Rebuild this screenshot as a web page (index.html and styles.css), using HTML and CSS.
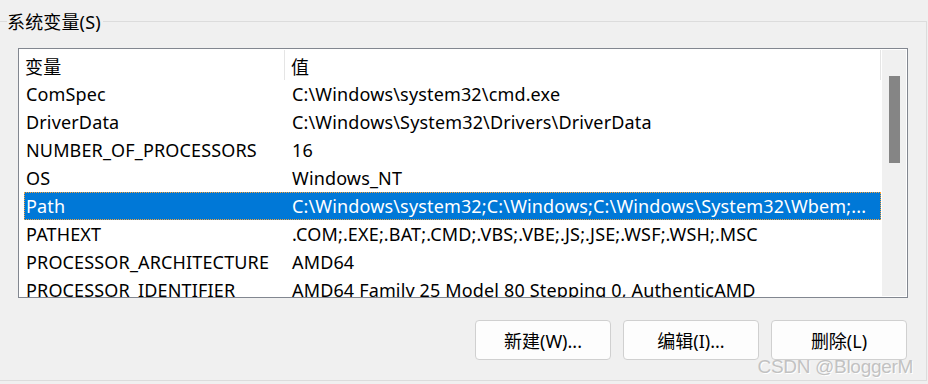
FILE: index.html
```html
<!DOCTYPE html>
<html lang="zh-CN">
<head>
    <meta charset="UTF-8">
    <title>系统变量</title>
    <link rel="stylesheet" href="styles.css">
</head>
<body>
    <div class="group">
        <div class="legend">系统变量(S)</div>
        <div class="listbox">
            <div class="table">
                <div class="header">
                    <div class="col-name">变量</div>
                    <div class="col-value">值</div>
                </div>
                <div class="row"><div class="col-name">ComSpec</div><div class="col-value">C:\Windows\system32\cmd.exe</div></div>
                <div class="row"><div class="col-name">DriverData</div><div class="col-value">C:\Windows\System32\Drivers\DriverData</div></div>
                <div class="row"><div class="col-name">NUMBER_OF_PROCESSORS</div><div class="col-value">16</div></div>
                <div class="row"><div class="col-name">OS</div><div class="col-value">Windows_NT</div></div>
                <div class="row selected"><div class="col-name">Path</div><div class="col-value">C:\Windows\system32;C:\Windows;C:\Windows\System32\Wbem;...</div></div>
                <div class="row"><div class="col-name">PATHEXT</div><div class="col-value">.COM;.EXE;.BAT;.CMD;.VBS;.VBE;.JS;.JSE;.WSF;.WSH;.MSC</div></div>
                <div class="row"><div class="col-name">PROCESSOR_ARCHITECTURE</div><div class="col-value">AMD64</div></div>
                <div class="row"><div class="col-name">PROCESSOR_IDENTIFIER</div><div class="col-value">AMD64 Family 25 Model 80 Stepping 0, AuthenticAMD</div></div>
            </div>
            <div class="scrollbar">
                <div class="thumb"></div>
            </div>
        </div>
        <div class="buttons">
            <button class="btn">新建(W)...</button>
            <button class="btn">编辑(I)...</button>
            <button class="btn">删除(L)</button>
        </div>
    </div>
    <div class="watermark">CSDN @BloggerM</div>
</body>
</html>
```

FILE: styles.css
```css
body {
    margin: 0;
    width: 928px;
    height: 384px;
    overflow: hidden;
    background-color: #f0f0f0;
    font-family: "Noto Sans", "Noto Sans CJK SC", sans-serif;
    font-size: 18px;
    letter-spacing: 0.15px;
    color: #000;
    position: relative;
}
.group {
    margin: 21px 1px 0 -10px;
    height: 360px;
    border: 1px solid #dcdcdc;
    box-sizing: border-box;
    padding-left: 27px;
    padding-right: 18px;
}
.legend {
    display: inline-block;
    margin: -13px 0 0 -11px;
    padding-right: 2px;
    height: 24px;
    line-height: 26px;
    background-color: #f0f0f0;
    vertical-align: top;
}
.listbox {
    margin-top: 2px;
    height: 248px;
    border: 1px solid #828790;
    background-color: #fff;
    display: flex;
    overflow: hidden;
}
.table {
    flex-grow: 1;
    padding-left: 5px;
    overflow: hidden;
}
.header {
    display: flex;
    height: 31px;
}
.header .col-name,
.header .col-value {
    border-right: 1px solid #e5e5e5;
    margin-top: 1px;
    height: 30px;
    line-height: 34px;
}
.row {
    display: flex;
    height: 28px;
    line-height: 27px;
    box-sizing: border-box;
    border: 1px solid transparent;
    white-space: nowrap;
}
.col-name {
    width: 259px;
    padding-left: 1px;
    flex-shrink: 0;
}
.col-value {
    flex-grow: 1;
    padding-left: 6px;
    overflow: hidden;
}
.row .col-value {
    padding-left: 7px;
}
.row.selected {
    background-color: #0078d7;
    color: #fff;
    border: 1px dotted #f7a23a;
}
.scrollbar {
    width: 26px;
    flex-shrink: 0;
    background-color: #f0f0f0;
    border: 1px solid #fff;
    box-sizing: border-box;
    padding: 26px 0 0 7px;
}
.thumb {
    width: 11px;
    height: 87px;
    background-color: #858585;
}
.buttons {
    display: flex;
    justify-content: flex-end;
    gap: 12px;
    margin-top: 22px;
    padding-right: 1px;
}
.btn {
    width: 136px;
    height: 40px;
    background-color: #fdfdfd;
    border: 1px solid #d0d0d0;
    border-radius: 4px;
    font-family: "Noto Sans", "Noto Sans CJK SC", sans-serif;
    font-size: 18px;
    color: #000;
    padding: 0;
}
.watermark {
    position: absolute;
    right: 15px;
    bottom: 6px;
    font-family: "Liberation Sans", sans-serif;
    font-size: 19px;
    letter-spacing: -0.3px;
    color: #c2c2c2;
    text-shadow: 1px 1px 0 #fff;
}
```
